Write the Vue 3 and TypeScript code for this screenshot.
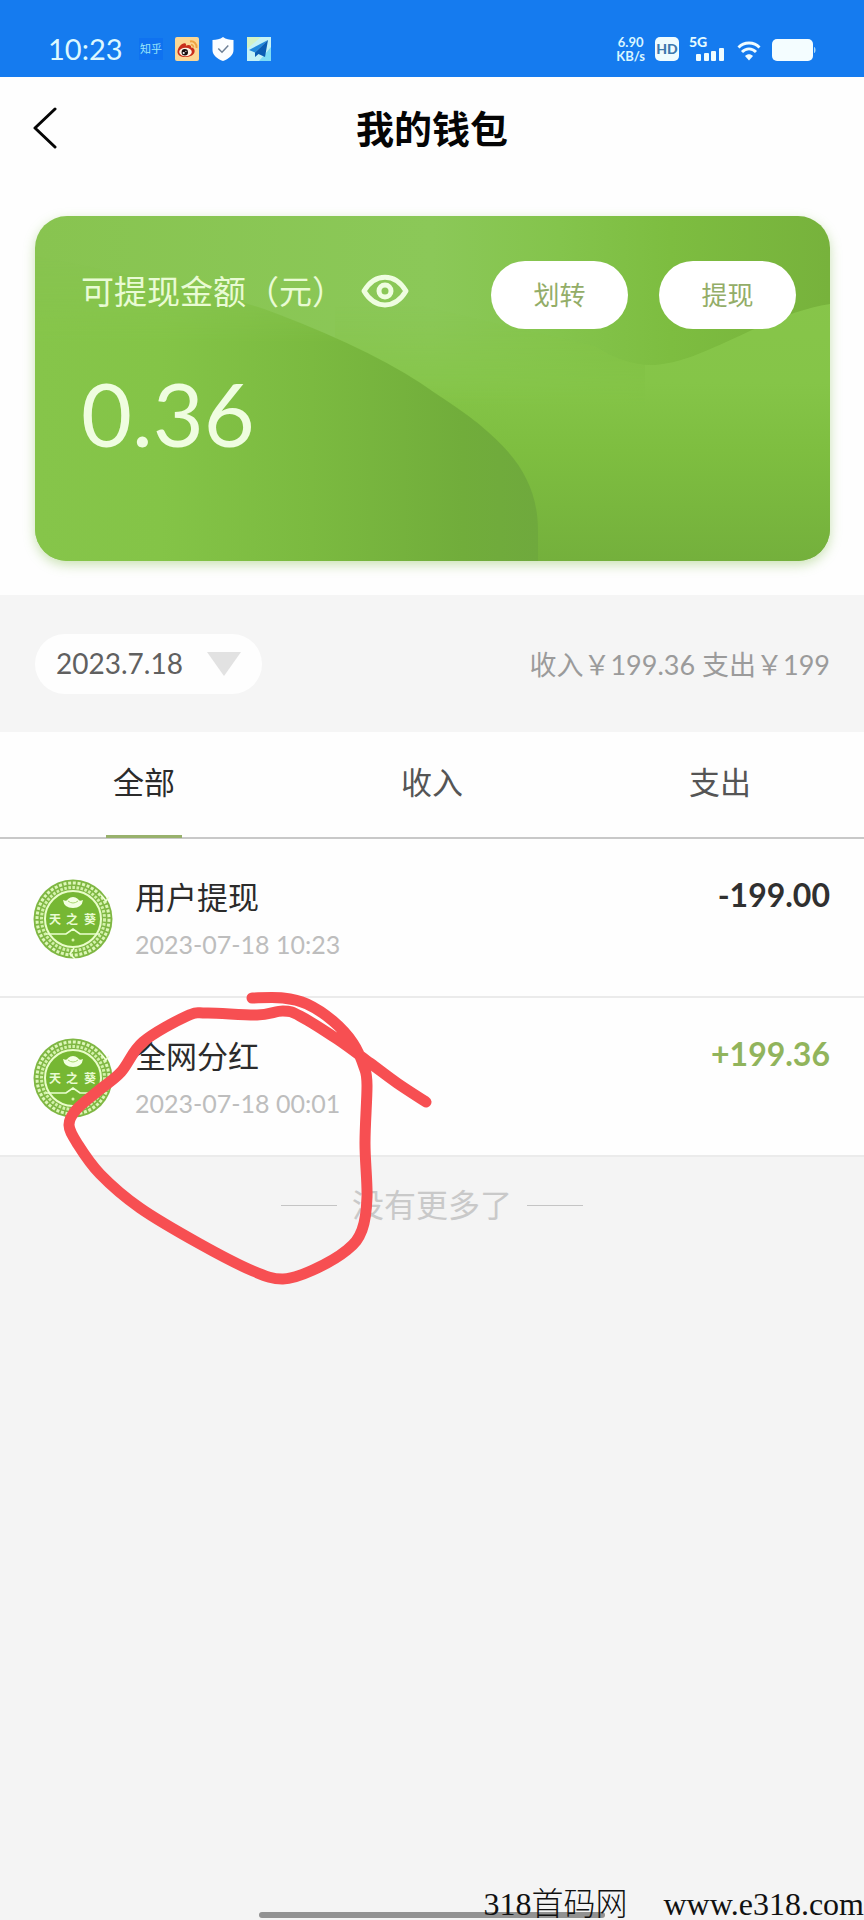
<script setup lang="ts">
import { ref } from 'vue'

interface Entry {
  id: number
  title: string
  time: string
  amount: string
  income: boolean
}

type Point = [number, number]

const tabs = ['全部', '收入', '支出']
const active = ref(0)
const visible = ref(true)

const entries: Entry[] = [
  { id: 1, title: '用户提现', time: '2023-07-18 10:23', amount: '-199.00', income: false },
  { id: 2, title: '全网分红', time: '2023-07-18 00:01', amount: '+199.36', income: true },
]

// Pen positions of the hand-drawn loop, from the top of the history list.
const strokePoints: Point[] = [
  [252, 159], [283, 159], [307, 165], [333, 182], [353, 204], [364, 228],
  [367, 246], [365, 304], [367, 358], [362, 391], [347, 411], [313, 431],
  [283, 440], [253, 432], [200, 405], [140, 369], [100, 335], [77, 304],
  [69, 286], [76, 271], [98, 252], [121, 233], [143, 203], [187, 177],
  [207, 174], [257, 176], [283, 172], [300, 177], [337, 200], [370, 224],
  [397, 244], [426, 263],
]

// Catmull-Rom spline through the points, written as cubic Béziers.
function smooth(points: Point[]): string {
  let d = `M${points[0][0]} ${points[0][1]}`
  for (let i = 0; i < points.length - 1; i++) {
    const p0 = points[Math.max(i - 1, 0)]
    const p1 = points[i]
    const p2 = points[i + 1]
    const p3 = points[Math.min(i + 2, points.length - 1)]
    const c1 = [p1[0] + (p2[0] - p0[0]) / 6, p1[1] + (p2[1] - p0[1]) / 6]
    const c2 = [p2[0] - (p3[0] - p1[0]) / 6, p2[1] - (p3[1] - p1[1]) / 6]
    d += `C${c1.join(' ')} ${c2.join(' ')} ${p2.join(' ')}`
  }
  return d
}

const strokePath = smooth(strokePoints)
</script>

<template>
  <div class="page">
    <div class="status">
      <span class="clock">10:23</span>
      <div class="apps">
        <span class="zhihu">知乎</span>
        <svg class="app" viewBox="0 0 24 24" aria-hidden="true">
          <rect width="24" height="24" rx="2" fill="#fbd795" />
          <path d="M15 4.500a5.500 5.500 0 0 1 6.500 6.500" fill="none" stroke="#eda343" stroke-width="2" />
          <path d="M16 7.500a3 3 0 0 1 2.500 3" fill="none" stroke="#eda343" stroke-width="1.500" />
          <path d="M2.500 15C2.500 10 8 5 10.500 6.500c.8.700.5 1.700.3 2.300 2-1.200 5.700-1.300 5.200 1.700 2.500 0 4 1.700 3.600 4.200-.6 3.500-5 5.300-9.300 5.300-4.600 0-7.800-2-7.800-5z" fill="#c92f1b" />
          <ellipse cx="10.500" cy="15" rx="6.300" ry="4.200" fill="#fff3e4" />
          <circle cx="9.800" cy="15.200" r="3.200" fill="#171010" />
          <circle cx="8.700" cy="16" r="1.100" fill="#fff" />
          <circle cx="10.900" cy="14.300" r=".6" fill="#fff" />
        </svg>
        <svg class="app" viewBox="0 0 24 24" aria-hidden="true">
          <path d="M12 0c3 2.200 6.500 3 10.500 3v10c0 5.500-5 9-10.500 11C6.500 22 1.500 18.500 1.500 13V3C5.500 3 9 2.200 12 0z" fill="#fbfdff" />
          <path d="M7.300 11.500l3.700 3.700 6.300-6.600" fill="none" stroke="#6d7f95" stroke-width="1.500" />
        </svg>
        <svg class="app" viewBox="0 0 24 24" aria-hidden="true">
          <rect width="24" height="24" fill="#c5f2f7" />
          <path d="M0 0h14L0 12z" fill="#d3f2c6" />
          <path d="M24 10v14H12z" fill="#7edcf5" />
          <path d="M21 3L2 13l6 2.500z" fill="#2389db" />
          <path d="M21 3L8 15.500V20l3.500-3 6.500 3z" fill="#0b5db4" />
        </svg>
      </div>
      <div class="signals">
        <span class="speed"><span>6.90</span><span>KB/s</span></span>
        <span class="hd">HD</span>
        <svg class="cell" viewBox="0 0 36 28" aria-hidden="true">
          <text x="1" y="14" font-size="14" font-weight="900" fill="#e6fbff">5G</text>
          <rect x="8" y="21" width="5" height="7" rx="1" fill="#effcff" />
          <rect x="16" y="20" width="5" height="8" rx="1" fill="#effcff" />
          <rect x="23" y="18" width="5" height="10" rx="1" fill="#effcff" />
          <rect x="31" y="15" width="5" height="13" rx="1" fill="#effcff" />
        </svg>
        <svg class="wifi" viewBox="0 0 24 24" aria-hidden="true">
          <g fill="none" stroke="#effcff" stroke-width="2.800">
            <path d="M1.500 10.500C7 4.500 17 4.500 22.500 10.500" />
            <path d="M5 15c4-4.300 10-4.300 14 0" />
          </g>
          <path d="M8 19c2.500-2.300 5.500-2.300 8 0l-4 4.500z" fill="#effcff" />
        </svg>
        <svg class="battery" viewBox="0 0 44 24" aria-hidden="true">
          <rect x="0" y="2" width="41" height="22" rx="5" fill="#f4fdff" />
          <path d="M42 10c2 0 2 6 0 6z" fill="#a9d9fb" />
        </svg>
      </div>
    </div>

    <header class="nav">
      <button class="back" type="button" aria-label="返回">
        <svg viewBox="0 0 24 42" aria-hidden="true">
          <path d="M22 2L2 21l20 19" fill="none" stroke="#050505" stroke-width="3" stroke-linecap="round" stroke-linejoin="round" />
        </svg>
      </button>
      <h1>我的钱包</h1>
    </header>

    <section class="wallet">
      <div class="card">
        <svg class="waves" viewBox="0 0 795 345" preserveAspectRatio="none" aria-hidden="true">
          <defs>
            <linearGradient id="base" x1="0" y1="0" x2="1" y2="0">
              <stop offset="0" stop-color="#88c450" />
              <stop offset=".5" stop-color="#8bc858" />
              <stop offset=".66" stop-color="#84c44c" />
              <stop offset=".8" stop-color="#7dbd40" />
              <stop offset="1" stop-color="#77b23c" />
            </linearGradient>
            <linearGradient id="slope" gradientUnits="userSpaceOnUse" x1="0" y1="70" x2="0" y2="345">
              <stop offset="0" stop-color="#87c54a" />
              <stop offset=".35" stop-color="#85c548" />
              <stop offset=".6" stop-color="#7ebe40" />
              <stop offset="1" stop-color="#74b03c" />
            </linearGradient>
            <linearGradient id="hill" x1="0" y1="0" x2="1" y2="0">
              <stop offset="0" stop-color="#86c54a" />
              <stop offset=".25" stop-color="#84c447" />
              <stop offset=".55" stop-color="#7bba40" />
              <stop offset=".85" stop-color="#71ad3b" />
              <stop offset="1" stop-color="#6fa93d" />
            </linearGradient>
            <linearGradient id="fade" x1="0" y1="0" x2="0" y2="1">
              <stop offset="0" stop-color="#fff" stop-opacity="0" />
              <stop offset=".28" stop-color="#fff" />
            </linearGradient>
            <linearGradient id="fadeSlope" gradientUnits="userSpaceOnUse" x1="0" y1="90" x2="0" y2="190">
              <stop offset="0" stop-color="#fff" stop-opacity="0" />
              <stop offset="1" stop-color="#fff" />
            </linearGradient>
            <mask id="hillMask">
              <rect y="40" width="795" height="305" fill="url(#fade)" />
            </mask>
            <mask id="slopeMask">
              <rect width="610" height="345" fill="url(#fadeSlope)" />
              <rect x="610" width="185" height="345" fill="#fff" />
            </mask>
          </defs>
          <rect width="795" height="345" fill="url(#base)" />
          <path d="M300 70L560 130Q590 150 620 149C670 146 730 98 795 88V345H300z" fill="url(#slope)" mask="url(#slopeMask)" />
          <path d="M0 40C100 60 190 78 240 97Q345 137 400 177C470 222 503 258 503 315V345H0z" fill="url(#hill)" mask="url(#hillMask)" />
        </svg>
        <div class="card-top">
          <span class="label">可提现金额（元）</span>
          <button class="eye" type="button" aria-label="显示金额" :aria-pressed="visible" @click="visible = !visible">
            <svg viewBox="0 0 48 34" aria-hidden="true">
              <g fill="none" stroke="#effde0" stroke-width="5">
                <path d="M3 17C14-1.500 34-1.500 45 17 34 35.500 14 35.500 3 17z" stroke-linejoin="round" />
                <circle cx="24" cy="17" r="6" />
              </g>
            </svg>
          </button>
          <div class="actions">
            <button class="pill" type="button">划转</button>
            <button class="pill" type="button">提现</button>
          </div>
        </div>
        <p class="balance">{{ visible ? '0.36' : '****' }}</p>
      </div>
    </section>

    <section class="filter">
      <button class="date" type="button">
        <span>2023.7.18</span>
        <svg viewBox="0 0 34 24" aria-hidden="true"><path d="M0 0h34L17 24z" fill="#e2e2e2" /></svg>
      </button>
      <span class="totals">收入￥199.36 支出￥199</span>
    </section>

    <div class="tabs" role="tablist">
      <button
        v-for="(tab, i) in tabs"
        :key="tab"
        class="tab"
        :class="{ on: active === i }"
        type="button"
        role="tab"
        :aria-selected="active === i"
        @click="active = i"
      >{{ tab }}</button>
    </div>

    <main class="history">
      <ul class="list">
        <li v-for="entry in entries" :key="entry.id" class="row">
          <svg class="seal" viewBox="0 0 80 80" aria-hidden="true">
            <circle cx="40" cy="40" r="39.500" fill="#7fb743" />
            <circle cx="40" cy="40" r="36" fill="none" stroke="#ddf7b8" stroke-width="3" stroke-dasharray="3 1.700" />
            <circle cx="40" cy="40" r="31.500" fill="none" stroke="#d3f2aa" stroke-width="3" stroke-dasharray="2.600 1.500" />
            <circle cx="40" cy="40" r="28" fill="#76b733" stroke="#e9fdc9" stroke-width="2" />
            <path d="M68 16l5 6 3-4M42 80l-5-5 4-6" fill="none" stroke="#efffd5" stroke-width="1.500" />
            <path d="M30 21q4 2 5-1 5-4 10 0 1 3 5 1-1 8-10 8t-10-8z" fill="#f3ffe2" />
            <path d="M35 22q5 4 10 0" fill="none" stroke="#a9d66f" />
            <text x="22" y="45" font-size="12" font-weight="700" text-anchor="middle" fill="#e9fbd2">天</text>
            <text x="39" y="45" font-size="12" font-weight="700" text-anchor="middle" fill="#e9fbd2">之</text>
            <text x="57" y="45" font-size="12" font-weight="700" text-anchor="middle" fill="#e9fbd2">葵</text>
            <path d="M13 55h20l7-5 7 5h20" fill="none" stroke="#eaffcf" stroke-width="1.700" />
            <circle cx="40" cy="61" r="1.500" fill="#d7f5a8" />
          </svg>
          <div class="info">
            <span class="title">{{ entry.title }}</span>
            <time class="time">{{ entry.time }}</time>
          </div>
          <span class="amount" :class="{ income: entry.income }">{{ entry.amount }}</span>
        </li>
      </ul>
      <p class="end">没有更多了</p>
      <svg class="scribble" viewBox="0 0 450 460" aria-hidden="true">
        <path
          :d="strokePath"
          fill="none"
          stroke="#f74f52"
          stroke-width="11"
          stroke-linecap="round"
          stroke-linejoin="round"
        />
      </svg>
    </main>

    <div class="home-bar"></div>
    <div class="watermark"><span>318首码网</span><span>www.e318.com</span></div>
  </div>
</template>

<style>
body {
  margin: 0;
}
</style>

<style scoped>
.page {
  position: relative;
  display: flex;
  flex-direction: column;
  min-height: 100vh;
  overflow: hidden;
  background: #f4f4f4;
  color: #2b2b2b;
  font-family: Lato, "Noto Sans CJK SC", sans-serif;
}

button {
  padding: 0;
  border: 0;
  background: none;
  color: inherit;
  font: inherit;
  cursor: pointer;
}

svg {
  display: block;
}

.status {
  box-sizing: border-box;
  display: flex;
  align-items: center;
  height: 77px;
  padding: 20px 48px 0;
  background: #157bef;
}

.clock {
  width: 91px;
  color: #dcf8ff;
  font-size: 29px;
  line-height: 36px;
}

.apps {
  display: flex;
  align-items: center;
  gap: 12px;
}

.zhihu {
  width: 24px;
  background: #0f72f0;
  color: #9be6fa;
  font-size: 11px;
  line-height: 22px;
  text-align: center;
  white-space: nowrap;
}

.app {
  width: 24px;
  height: 24px;
}

.signals {
  display: flex;
  align-items: center;
  margin-left: auto;
}

.speed {
  display: flex;
  flex-direction: column;
  align-items: center;
  margin-right: 10px;
  color: #d9f6ff;
  font-size: 13px;
  font-weight: 700;
  line-height: 14px;
}

.hd {
  width: 24px;
  margin-right: 9px;
  border-radius: 5px;
  background: #effcff;
  color: #3d79ad;
  font-size: 14px;
  font-weight: 900;
  line-height: 24px;
  text-align: center;
}

.cell {
  width: 36px;
  height: 28px;
  margin-right: 13px;
  padding-bottom: 4px;
}

.wifi {
  width: 24px;
  height: 24px;
  margin-right: 11px;
}

.battery {
  width: 44px;
  height: 24px;
}

.nav {
  box-sizing: border-box;
  display: grid;
  grid-template-columns: 1fr auto 1fr;
  align-items: center;
  height: 104px;
  padding: 0 33px 3px;
  background: #fefefe;
}

.back svg {
  width: 24px;
  height: 42px;
}

.back {
  justify-self: start;
}

.nav h1 {
  margin: 0;
  color: #050505;
  font-size: 38px;
  font-weight: 700;
  line-height: 48px;
}

.wallet {
  padding: 35px 34px 34px 35px;
  background: #fefefe;
}

.card {
  position: relative;
  box-sizing: border-box;
  min-height: 345px;
  padding: 45px 34px 40px 46px;
  border-radius: 32px;
  box-shadow: 0 4px 12px rgba(125, 185, 70, 0.4);
}

.waves {
  position: absolute;
  inset: 0;
  width: 100%;
  height: 100%;
  border-radius: 32px;
}

.card-top {
  position: relative;
  display: flex;
  align-items: center;
}

.label {
  padding-bottom: 8px;
  color: #e9fbd4;
  font-size: 33px;
  line-height: 40px;
  white-space: nowrap;
}

.eye {
  margin-left: 16px;
  padding-bottom: 8px;
}

.eye svg {
  width: 48px;
  height: 34px;
}

.actions {
  display: flex;
  gap: 31px;
  margin-left: auto;
}

.pill {
  width: 137px;
  height: 68px;
  padding-bottom: 4px;
  border-radius: 34px;
  background: #fff;
  color: #93ad68;
  font-size: 26px;
}

.balance {
  position: relative;
  margin: 30px 0 0;
  color: #effde0;
  font-size: 88px;
  line-height: 108px;
}

.filter {
  display: flex;
  align-items: center;
  justify-content: space-between;
  height: 137px;
  padding: 0 34px 0 35px;
  background: #f5f5f5;
}

.date {
  display: flex;
  align-items: center;
  gap: 24px;
  height: 60px;
  padding: 0 21px;
  border-radius: 30px;
  background: #fefefe;
  color: #606060;
  font-size: 28px;
}

.date span {
  padding-bottom: 2px;
}

.date svg {
  width: 34px;
  height: 24px;
}

.totals {
  color: #9b9b9b;
  font-size: 27px;
}

.tabs {
  display: grid;
  grid-template-columns: repeat(3, 1fr);
  height: 105px;
  border-bottom: 2px solid #c8c8c8;
  background: #fefefe;
}

.tab {
  position: relative;
  padding-bottom: 8px;
  color: #555;
  font-size: 31px;
}

.tab.on {
  color: #2b2b2b;
}

.tab.on::after {
  position: absolute;
  bottom: -1px;
  left: 50%;
  width: 76px;
  height: 3px;
  margin-left: -38px;
  background: #98b16c;
  content: "";
}

.history {
  position: relative;
}

.list {
  margin: 0;
  padding: 0;
  list-style: none;
}

.row {
  box-sizing: border-box;
  display: flex;
  align-items: flex-start;
  height: 159px;
  padding: 38px 34px 0 33px;
  border-bottom: 2px solid #ebebeb;
  background: #fefefe;
}

.seal {
  width: 80px;
  height: 80px;
  margin-top: 2px;
  margin-right: 22px;
}

.info {
  display: flex;
  flex-direction: column;
}

.title {
  font-size: 31px;
  line-height: 40px;
}

.time {
  margin-top: 11px;
  color: #bdbdbd;
  font-size: 25px;
  line-height: 32px;
}

.amount {
  margin-left: auto;
  color: #303030;
  font-size: 32px;
  font-weight: 700;
  line-height: 36px;
}

.amount.income {
  color: #91b45c;
}

.end {
  display: flex;
  align-items: center;
  justify-content: center;
  gap: 15px;
  margin: 0;
  padding-top: 26px;
  color: #c9c9c9;
  font-size: 32px;
  line-height: 44px;
}

.end::before,
.end::after {
  width: 56px;
  height: 1px;
  background: #c4c4c4;
  content: "";
}

.scribble {
  position: absolute;
  top: 0;
  left: 0;
  width: 450px;
  height: 460px;
  pointer-events: none;
}

.home-bar {
  position: absolute;
  bottom: 2px;
  left: 30%;
  width: 40%;
  height: 6px;
  border-radius: 3px;
  background: #929292;
}

.watermark {
  position: absolute;
  right: 0;
  bottom: 0;
  display: flex;
  gap: 36px;
  color: #111;
  font-family: "Liberation Serif", "Noto Sans CJK SC", serif;
  font-size: 32px;
  font-weight: 300;
  line-height: 32px;
  white-space: nowrap;
}
</style>
